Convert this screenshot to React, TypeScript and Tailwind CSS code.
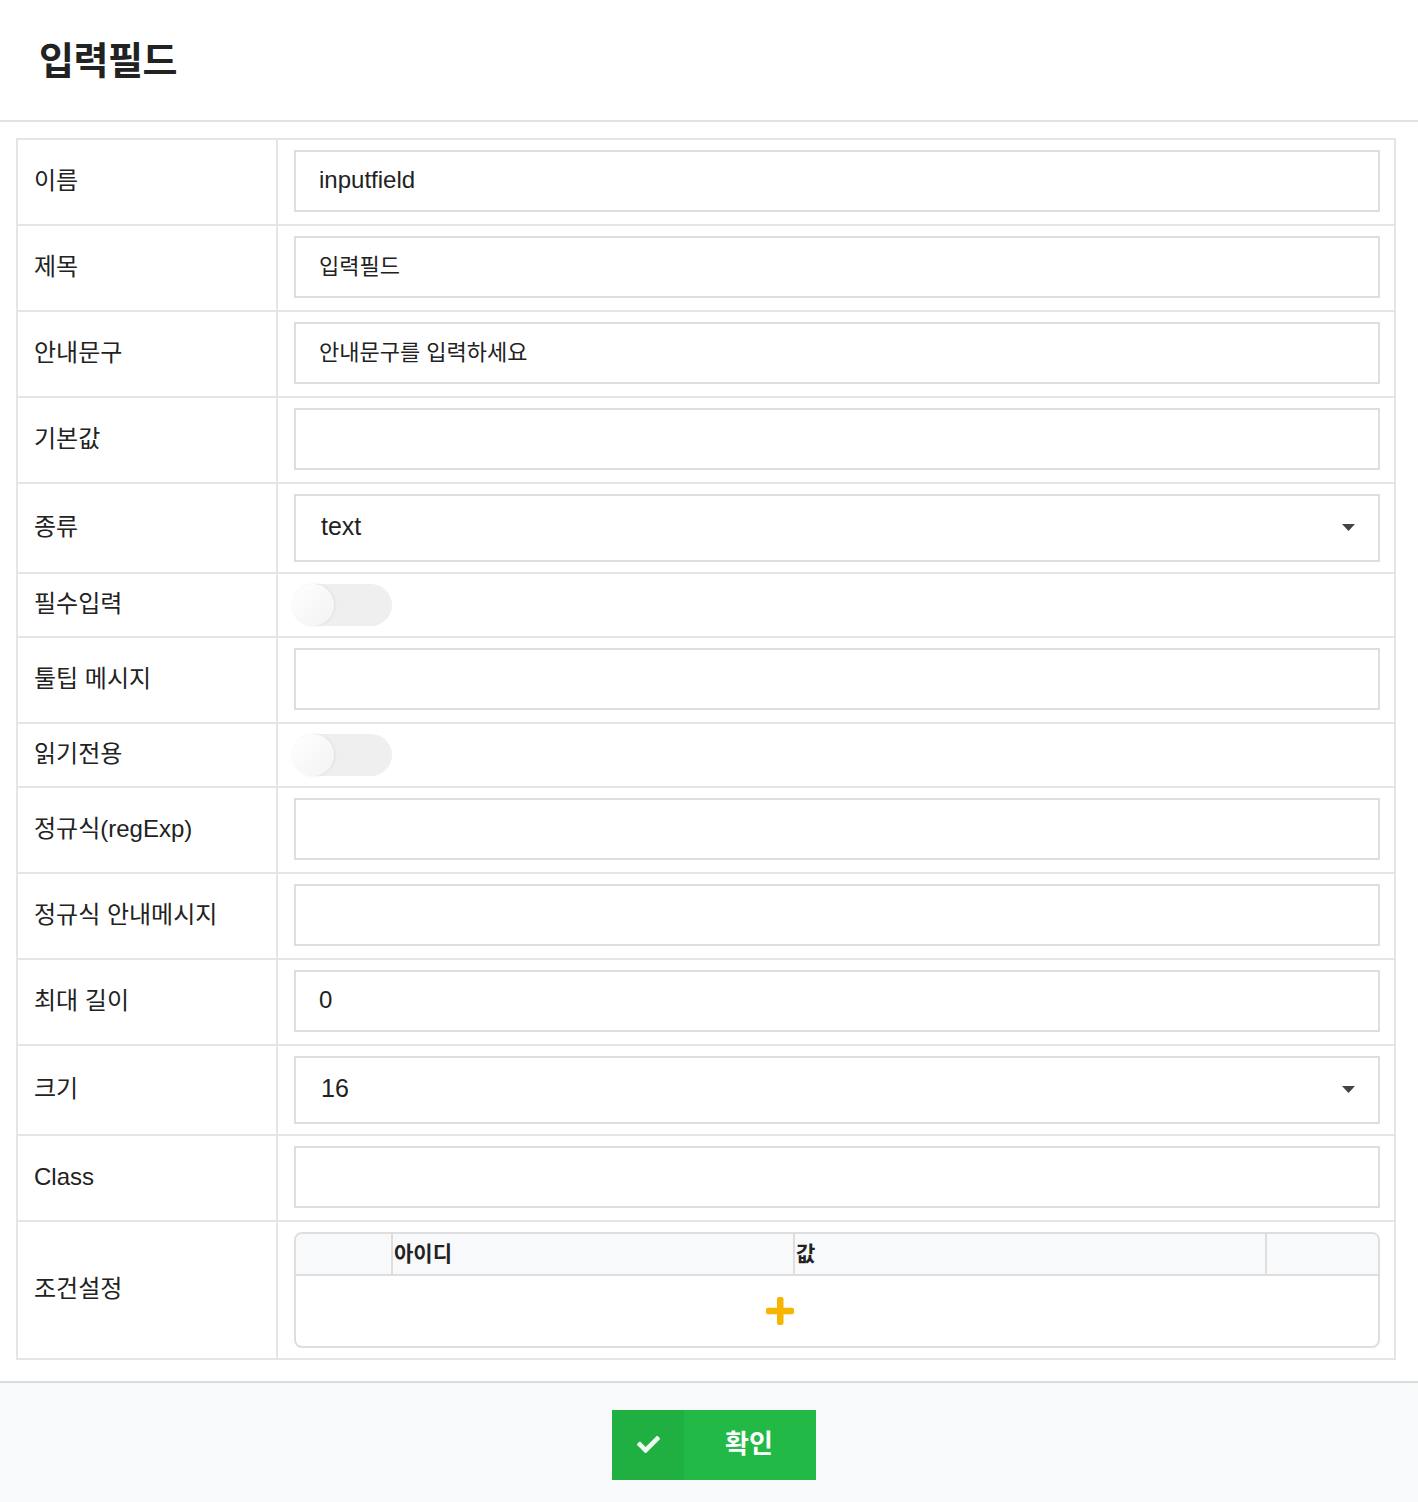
import { FaCheck } from "react-icons/fa";

const FONT = "font-['Liberation_Sans','Noto_Sans_CJK_KR',sans-serif]";

type Row =
  | { label: React.ReactNode; kind: "input"; value?: string; latin?: boolean }
  | { label: React.ReactNode; kind: "select"; value: string }
  | { label: React.ReactNode; kind: "toggle" }
  | { label: React.ReactNode; kind: "cond" };

const ROWS: Row[] = [
  { label: "이름", kind: "input", value: "inputfield", latin: true },
  { label: "제목", kind: "input", value: "입력필드" },
  { label: "안내문구", kind: "input", value: "안내문구를 입력하세요" },
  { label: "기본값", kind: "input" },
  { label: "종류", kind: "select", value: "text" },
  { label: "필수입력", kind: "toggle" },
  { label: "툴팁 메시지", kind: "input" },
  { label: "읽기전용", kind: "toggle" },
  {
    label: (
      <>
        정규식<span className="text-[24px]">(regExp)</span>
      </>
    ),
    kind: "input",
  },
  { label: "정규식 안내메시지", kind: "input" },
  { label: "최대 길이", kind: "input", value: "0", latin: true },
  { label: "크기", kind: "select", value: "16" },
  { label: <span className="text-[24px]">Class</span>, kind: "input" },
  { label: "조건설정", kind: "cond" },
];

function TextInput({ value, latin }: { value?: string; latin?: boolean }) {
  return (
    <div
      className={`h-[62px] w-full border-2 border-[#dedede] bg-white px-[23px] pb-[2px] flex items-center text-[#222] ${
        latin ? "text-[24px]" : "text-[22px]"
      }`}
    >
      {value}
    </div>
  );
}

function SelectBox({ value }: { value: string }) {
  return (
    <div className="h-[68px] w-full border-2 border-[#dedede] bg-white pl-[25px] pr-[23px] pb-[2px] flex items-center justify-between text-[25px] text-[#222]">
      <span>{value}</span>
      <svg width="13" height="7" viewBox="0 0 13 7">
        <polygon points="0,0 13,0 6.5,7" fill="#444" />
      </svg>
    </div>
  );
}

function Toggle() {
  return (
    <div className="relative -ml-[2px] h-[42px] w-[100px] rounded-full bg-[#efefef]">
      <div className="absolute left-0 top-0 size-[42px] rounded-full bg-gradient-to-br from-white to-[#f3f3f3] shadow-[1px_0_3px_rgba(0,0,0,0.08)]" />
    </div>
  );
}

function PlusIcon() {
  return (
    <svg width="28" height="28" viewBox="0 0 28 28">
      <rect x="11" y="0" width="6.5" height="28" rx="2" fill="#f7b500" />
      <rect x="0" y="10.75" width="28" height="6.5" rx="2" fill="#f7b500" />
    </svg>
  );
}

function ConditionTable() {
  return (
    <div className="h-[116px] w-full rounded-[8px] border-2 border-[#dedede] overflow-hidden flex flex-col">
      <div className="grid grid-cols-[97px_402px_472px_1fr] h-[42px] bg-[#f8f9fa] border-b-2 border-[#dedede] text-[21px] font-bold text-[#222]">
        <div className="border-r-2 border-[#dedede]" />
        <div className="border-r-2 border-[#dedede] flex items-center pl-[1px]">아이디</div>
        <div className="border-r-2 border-[#dedede] flex items-center pl-[1px]">값</div>
        <div />
      </div>
      <div className="grid grid-cols-[967px_1fr] flex-1">
        <div className="flex items-center justify-center">
          <PlusIcon />
        </div>
        <div />
      </div>
    </div>
  );
}

export default function App() {
  return (
    <div className={`${FONT} w-[1418px] min-h-[1502px] bg-white flex flex-col text-[#222]`}>
      <div className="h-[122px] border-b-2 border-[#e2e2e2] flex items-center pl-[39px] pt-[2px]">
        <h1 className="text-[38px] font-bold text-[#222] tracking-[-0.5px]">입력필드</h1>
      </div>

      <div className="pl-[16px] pr-[22px] pt-[16px] pb-[21px]">
        <div className="border-2 border-[#e5e5e5]">
          {ROWS.map((row, i) => (
            <div
              key={i}
              className={`flex ${i < ROWS.length - 1 ? "border-b-2 border-[#e5e5e5]" : ""}`}
            >
              <div className="w-[260px] shrink-0 border-r-2 border-[#e5e5e5] pl-[16px] pb-[2px] flex items-center text-[24px] text-[#222]">
                {row.label}
              </div>
              <div
                className={`flex-1 pl-[16px] pr-[14px] flex items-center ${
                  row.kind === "input" ? "pt-[10px] pb-[12px]" : "py-[10px]"
                }`}
              >
                {row.kind === "input" && <TextInput value={row.value} latin={row.latin} />}
                {row.kind === "select" && <SelectBox value={row.value} />}
                {row.kind === "toggle" && <Toggle />}
                {row.kind === "cond" && <ConditionTable />}
              </div>
            </div>
          ))}
        </div>
      </div>

      <div className="flex-1 border-t-2 border-[#dcdcdc] bg-[#f8f9fa] flex items-center justify-center pl-[10px] pt-[4px]">
        <button
          type="button"
          className="h-[70px] w-[204px] flex bg-[#22b946] text-white"
        >
          <span className="w-[72px] h-full bg-[#20b042] flex items-center justify-center">
            <FaCheck size={23} className="text-[#eef9f0]" />
          </span>
          <span className="flex-1 flex items-center justify-center text-[26px] font-bold pr-[2px]">
            확인
          </span>
        </button>
      </div>
    </div>
  );
}
